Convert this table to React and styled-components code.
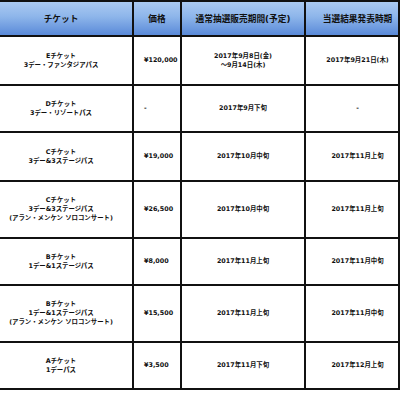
import React from "react";
import styled, { createGlobalStyle } from "styled-components";

const GlobalStyle = createGlobalStyle`
  html, body {
    margin: 0;
    padding: 0;
    background: #fff;
    overflow: hidden;
  }
`;

const Table = styled.table`
  border-collapse: collapse;
  table-layout: fixed;
  width: 410px;
  margin-left: -12px;
  font-family: "DejaVu Sans", "Noto Sans CJK JP", sans-serif;
  font-weight: bold;
  color: #111;

  th, td {
    border: 2px solid #111;
    padding: 0;
    vertical-align: middle;
    text-align: center;
  }
`;

const HeadRow = styled.tr`
  height: 35px;
`;

const HeadCell = styled.th`
  font-size: 8.7px;
  line-height: 10px;
  background: linear-gradient(#abcaf2 0%, #8db5ea 45%, #5a8ad9 100%);
  padding-left: ${(p) => (p.shift ? "11px" : "0")} !important;
`;

const Row = styled.tr`
  height: ${(p) => p.h}px;
`;

const Cell = styled.td`
  font-size: 6.4px;
  line-height: 9px;
  white-space: nowrap;
`;

const PriceCell = styled(Cell)`
  text-align: left !important;
  padding-left: 10px !important;
`;

const ResultCell = styled(Cell)`
  padding-left: 11px !important;
`;

const rows = [
  { h: 49, ticket: ["Eチケット", "3デー・ファンタジアパス"], price: "¥120,000", period: ["2017年9月8日(金)", "～9月14日(木)"], result: "2017年9月21日(木)" },
  { h: 47, ticket: ["Dチケット", "3デー・リゾートパス"], price: "-", period: ["2017年9月下旬"], result: "-" },
  { h: 49, ticket: ["Cチケット", "3デー&3ステージパス"], price: "¥19,000", period: ["2017年10月中旬"], result: "2017年11月上旬" },
  { h: 57, ticket: ["Cチケット", "3デー&3ステージパス", "(アラン・メンケン ソロコンサート)"], price: "¥26,500", period: ["2017年10月中旬"], result: "2017年11月上旬" },
  { h: 47, ticket: ["Bチケット", "1デー&1ステージパス"], price: "¥8,000", period: ["2017年11月上旬"], result: "2017年11月中旬" },
  { h: 57, ticket: ["Bチケット", "1デー&1ステージパス", "(アラン・メンケン ソロコンサート)"], price: "¥15,500", period: ["2017年11月上旬"], result: "2017年11月中旬" },
  { h: 47, ticket: ["Aチケット", "1デーパス"], price: "¥3,500", period: ["2017年11月下旬"], result: "2017年12月上旬" },
];

const Lines = ({ items }) =>
  items.map((t, i) => (
    <React.Fragment key={i}>
      {i > 0 && <br />}
      {t}
    </React.Fragment>
  ));

const App = () => {
  return (
    <>
      <GlobalStyle />
      <Table>
        <colgroup>
          <col style={{ width: 144 }} />
          <col style={{ width: 48 }} />
          <col style={{ width: 124 }} />
          <col style={{ width: 94 }} />
        </colgroup>
        <thead>
          <HeadRow>
            <HeadCell>チケット</HeadCell>
            <HeadCell>価格</HeadCell>
            <HeadCell>通常抽選販売期間(予定)</HeadCell>
            <HeadCell shift>当選結果発表時期</HeadCell>
          </HeadRow>
        </thead>
        <tbody>
          {rows.map((r, i) => (
            <Row key={i} h={r.h}>
              <Cell>
                <Lines items={r.ticket} />
              </Cell>
              <PriceCell>{r.price}</PriceCell>
              <Cell>
                <Lines items={r.period} />
              </Cell>
              <ResultCell>{r.result}</ResultCell>
            </Row>
          ))}
        </tbody>
      </Table>
    </>
  );
};

export default App;
